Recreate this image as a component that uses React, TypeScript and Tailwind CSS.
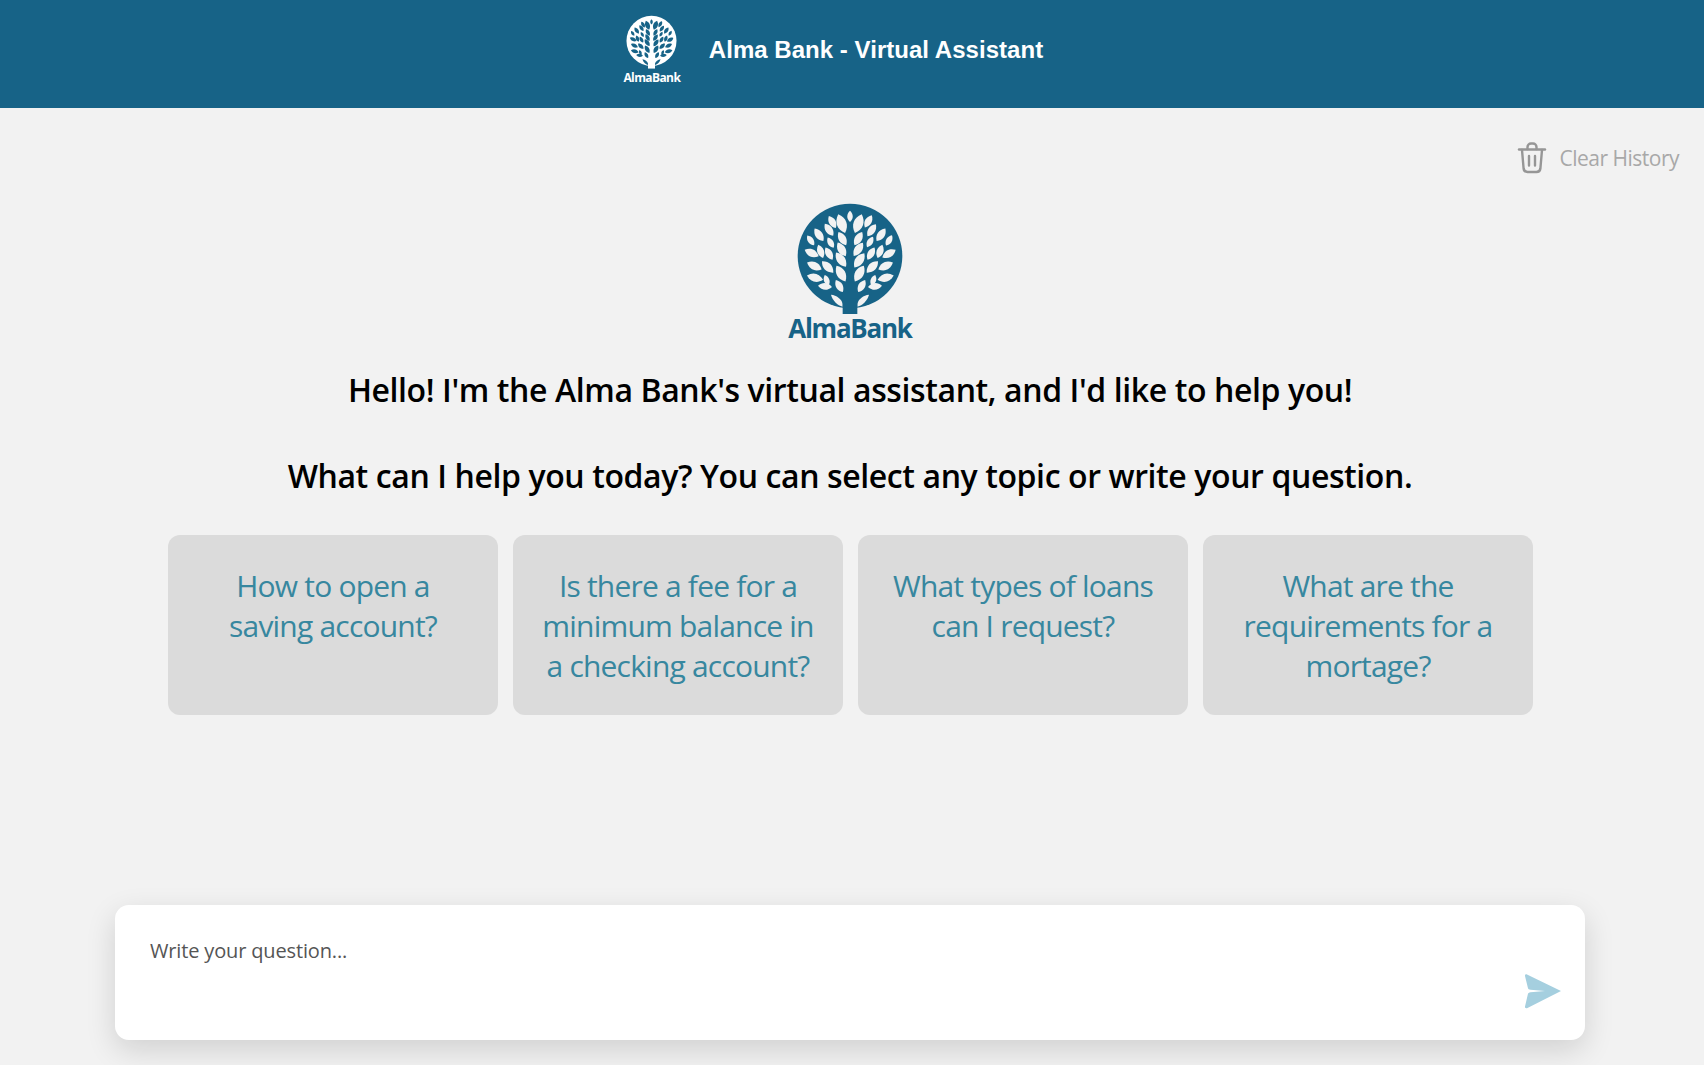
const leaves: [number, number, number, number][] = [
  [240, 73, 0, 17],
  [215, 95, -20, 30],
  [265, 95, 20, 30],
  [187, 90, -30, 21],
  [295, 88, 30, 21],
  [147, 128, -35, 23],
  [177, 113, -35, 22],
  [217, 140, -30, 23],
  [265, 140, 30, 23],
  [305, 115, 35, 22],
  [333, 128, 35, 23],
  [122, 145, -35, 18],
  [357, 145, 30, 18],
  [182, 152, -30, 18],
  [300, 150, 30, 18],
  [125, 183, -65, 23],
  [152, 178, -20, 21],
  [177, 185, -30, 21],
  [215, 172, -30, 24],
  [265, 172, 35, 24],
  [303, 185, 30, 21],
  [330, 178, 20, 21],
  [357, 185, 60, 23],
  [133, 222, -65, 24],
  [173, 225, -45, 24],
  [213, 203, -35, 26],
  [268, 205, 35, 26],
  [307, 225, 45, 24],
  [347, 222, 65, 24],
  [135, 257, -75, 25],
  [170, 265, -20, 17],
  [213, 245, -30, 27],
  [268, 245, 30, 27],
  [310, 265, 20, 17],
  [347, 257, 75, 25],
  [165, 283, -85, 21],
  [208, 282, -30, 21],
  [275, 282, 30, 21],
  [315, 283, 85, 21],
]

function TreeMark({ disc, leaf, className }: { disc: string; leaf: string; className: string }) {
  return (
    <svg viewBox="75 30 330 345" className={className}>
      <circle cx="240" cy="192" r="157" fill={disc} />
      {leaves.map(([x, y, a, l]) => (
        <path
          key={`${x}-${y}`}
          d={`M0 ${-l}C${l * 0.65} ${-l * 0.4} ${l * 0.65} ${l * 0.4} 0 ${l}C${-l * 0.65} ${l * 0.4} ${-l * 0.65} ${-l * 0.4} 0 ${-l}Z`}
          transform={`translate(${x} ${y}) rotate(${a})`}
          fill={leaf}
        />
      ))}
      <path d="M183 308C200 310 214 320 218 335V344C202 340 188 326 183 308Z" fill={leaf} />
      <path d="M297 308C280 310 266 320 262 335V344C278 340 292 326 297 308Z" fill={leaf} />
      <rect x="218" y="320" width="44" height="46" fill={disc} />
    </svg>
  )
}

const topics = [
  'How to open a saving account?',
  'Is there a fee for a minimum balance in a checking account?',
  'What types of loans can I request?',
  'What are the requirements for a mortage?',
]

export default function App() {
  return (
    <div className="flex h-[1065px] flex-col overflow-hidden bg-[#f2f2f2] font-['Open_Sans','Noto_Sans',sans-serif]">
      <header className="flex h-[108px] shrink-0 items-start justify-center bg-[#176387] pr-[39px]">
        <div className="mt-[15px] flex w-[60px] flex-col items-center">
          <TreeMark disc="#ffffff" leaf="#176387" className="h-[55px] w-[53px]" />
          <span className="mt-[1px] text-[12px] leading-[14px] font-bold tracking-[-0.6px] text-white">AlmaBank</span>
        </div>
        <h1 className="mt-[35px] ml-[27px] font-['Liberation_Sans',sans-serif] text-[24px] leading-[30px] font-bold tracking-[0.03px] text-white">
          Alma Bank - Virtual Assistant
        </h1>
      </header>

      <main className="flex min-h-0 flex-1 flex-col">
        <div className="flex justify-end pt-[34px] pr-[25px]">
          <button className="flex items-center gap-[12px] text-[21px] leading-[28px] text-[#a8a8a8]">
            <svg viewBox="0 0 30 32" fill="none" stroke="#969696" strokeWidth="2.4" strokeLinecap="round" strokeLinejoin="round" className="h-[32px] w-[30px]">
              <path d="M2 7.5h26" />
              <path d="M10.5 7V5a3.5 3.5 0 0 1 3.5-3.5h2A3.5 3.5 0 0 1 19.5 5v2" />
              <path d="M5 8l1.6 18.5a4 4 0 0 0 4 3.5h8.8a4 4 0 0 0 4-3.5L25 8" />
              <path d="M12 14v9.5M18 14v9.5" />
            </svg>
            <span className="tracking-[-0.5px]">Clear History</span>
          </button>
        </div>

        <div className="flex min-h-0 flex-1 flex-col pr-[4px]">
          <div className="mt-[28px] flex flex-col items-center">
            <TreeMark disc="#176387" leaf="#f2f2f2" className="h-[115px] w-[110px]" />
            <span className="-mt-[5px] text-[26px] leading-[32px] font-bold tracking-[-1.25px] text-[#176387]">AlmaBank</span>
          </div>

          <div className="mt-[24px] text-center text-[32px] leading-[43px] font-semibold tracking-[-0.4px] text-black">
            <p>Hello! I'm the Alma Bank's virtual assistant, and I'd like to help you!</p>
            <p className="mt-[43px]">What can I help you today? You can select any topic or write your question.</p>
          </div>

          <div className="mt-[38px] flex justify-center gap-[15px] pl-[1px]">
            {topics.map(t => (
              <button
                key={t}
                className="flex h-[180px] w-[330px] items-start justify-center rounded-[12px] bg-[#dbdbdb] px-[25px] pt-[31px] text-center text-[30px] leading-[40px] tracking-[-0.8px] text-[#37879f]"
              >
                {t}
              </button>
            ))}
          </div>

          <div className="mt-auto mb-[25px] flex h-[135px] w-[1470px] items-start justify-between self-center rounded-[14px] bg-white shadow-[0_10px_30px_rgba(0,0,0,0.14)]">
            <span className="mt-[32px] ml-[35px] text-[20px] leading-[28px] tracking-[-0.15px] text-[#555555]">Write your question...</span>
            <svg viewBox="0 0 38 36" className="mt-[68px] mr-[23px] h-[36px] w-[38px]">
              <path d="M3 1.5L37 18L3 35.2C1.6 35.6 .8 34.8 1 33.6L3.8 21.5C4 20 5 19.4 6.5 19.2L21 18L6.5 16.8C5 16.6 4 16 3.8 14.5L1 3C.8 1.8 1.8 1 3 1.5Z" fill="#a5cfdf" />
            </svg>
          </div>
        </div>
      </main>
    </div>
  )
}
